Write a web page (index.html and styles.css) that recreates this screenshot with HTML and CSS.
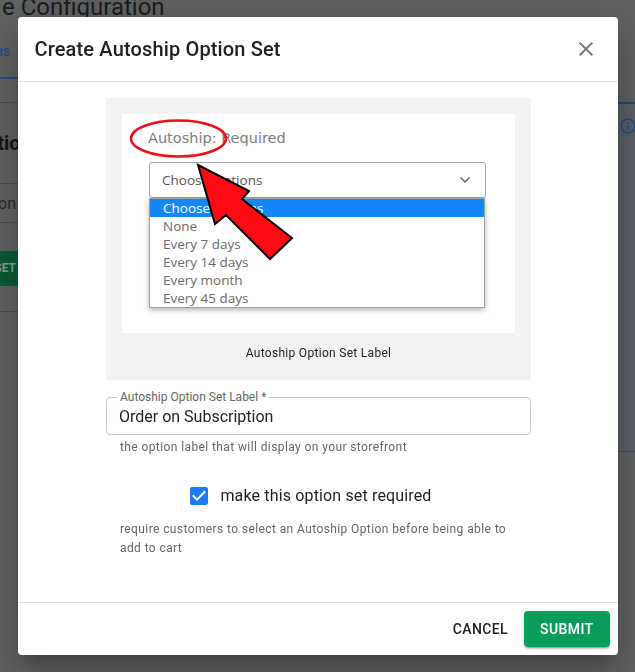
FILE: index.html
```html
<!DOCTYPE html>
<html lang="en">
<head>
  <meta charset="UTF-8">
  <meta name="viewport" content="width=device-width, initial-scale=1.0">
  <title>Autoship Configuration</title>
  <link rel="stylesheet" href="styles.css">
</head>
<body>

  <!-- page behind the dialog -->
  <div class="page">
    <h1 class="page-title">e Configuration</h1>
    <div class="page-main">
      <aside class="page-left">
        <div class="tabs"><span class="tab">Status</span></div>
        <div class="tabs-gap"></div>
        <div class="card-title"><span>Subscription Options</span></div>
        <div class="card-row"><span>Subscription</span></div>
        <div class="card-actions"><span class="page-btn">RESET</span></div>
      </aside>
      <div class="page-center"></div>
      <aside class="page-right">
        <div class="right-top"></div>
        <div class="right-panel">
          <svg class="info-icon" width="18" height="18" viewBox="0 0 24 24">
            <path fill="currentColor" d="M11 7h2v2h-2zm0 4h2v6h-2zm1-9C6.48 2 2 6.48 2 12s4.48 10 10 10 10-4.48 10-10S17.52 2 12 2zm0 18c-4.41 0-8-3.59-8-8s3.59-8 8-8 8 3.59 8 8-3.59 8-8 8z"/>
          </svg>
        </div>
      </aside>
    </div>
  </div>

  <!-- dialog -->
  <div class="backdrop">
    <div class="dialog">
      <div class="dialog-header">
        <h2 class="dialog-title">Create Autoship Option Set</h2>
        <button class="icon-btn" aria-label="close">
          <svg width="24" height="24" viewBox="0 0 24 24">
            <path fill="currentColor" d="M19 6.41 17.59 5 12 10.59 6.41 5 5 6.41 10.59 12 5 17.59 6.41 19 12 13.41 17.59 19 19 17.59 13.41 12z"/>
          </svg>
        </button>
      </div>

      <div class="dialog-content">
        <div class="form">
          <div class="preview">
            <div class="preview-card">
              <div class="preview-label">Autoship: Required</div>
              <div class="preview-select">
                <span>Choose Options</span>
                <svg width="12" height="8" viewBox="0 0 12 8">
                  <path d="M1.5 1.5 6 6l4.5-4.5" fill="none" stroke="#666" stroke-width="1.5"/>
                </svg>
              </div>
              <ul class="preview-options">
                <li class="active">Choose Options</li>
                <li>None</li>
                <li>Every 7 days</li>
                <li>Every 14 days</li>
                <li>Every month</li>
                <li>Every 45 days</li>
              </ul>
            </div>
            <div class="preview-caption">Autoship Option Set Label</div>
          </div>

          <div class="field">
            <span class="field-label">Autoship Option Set Label *</span>
            <div class="field-value">Order on Subscription</div>
          </div>
          <p class="helper">the option label that will display on your storefront</p>

          <div class="check-row">
            <label class="check">
              <span class="check-box">
                <svg width="24" height="24" viewBox="0 0 24 24">
                  <path fill="currentColor" d="M19 3H5c-1.11 0-2 .9-2 2v14c0 1.1.89 2 2 2h14c1.11 0 2-.9 2-2V5c0-1.1-.89-2-2-2zm-9 14l-5-5 1.41-1.41L10 14.17l7.59-7.59L19 8l-9 9z"/>
                </svg>
              </span>
              <span class="check-text">make this option set required</span>
            </label>
          </div>
          <p class="helper">require customers to select an Autoship Option before being able to add to cart</p>
        </div>
      </div>

      <div class="dialog-actions">
        <button class="btn btn-text">Cancel</button>
        <button class="btn btn-submit">Submit</button>
      </div>

      <!-- red annotation drawn on the screenshot -->
      <svg class="annotation" width="600" height="638" viewBox="0 0 600 638">
        <ellipse cx="160.5" cy="121.5" rx="47.5" ry="18" fill="none" stroke="#e8101a" stroke-width="2.5"/>
        <polygon points="180,148 231,174 224,182 274,221 252,242 208,198 197,207" fill="#ff0a12" stroke="#000" stroke-width="2" stroke-linejoin="miter"/>
      </svg>
    </div>
  </div>

</body>
</html>
```

FILE: styles.css
```css
body {
  margin: 0;
  background-color: #616264;
  font-family: Roboto, 'Liberation Sans', sans-serif;
  overflow: hidden;
}

/* page behind the overlay (drawn already dimmed) */
.page {
  height: 672px;
}

.page-title {
  margin: -5px 0 0 2px;
  font-size: 24px;
  font-weight: 400;
  line-height: 25px;
  color: #1b1b1b;
  white-space: nowrap;
}

.page-main {
  display: flex;
}

.page-left {
  width: 18px;
  overflow: hidden;
  display: flex;
  flex-direction: column;
}

.page-left > div {
  display: flex;
  justify-content: flex-end;
  white-space: nowrap;
}

.tabs {
  height: 53px;
  padding-top: 4px;
  align-items: center;
  border-bottom: 2px solid #214d7e;
}

.tab {
  padding-right: 8px;
  font-size: 14px;
  font-weight: 500;
  color: #24528a;
}

.tabs-gap {
  height: 23px;
  border-bottom: 1px solid #4d4e50;
}

.card-title {
  height: 80px;
  align-items: center;
  font-size: 20px;
  font-weight: 700;
  color: #151515;
}

.card-title span {
  margin-right: -24px;
}

.card-row {
  height: 38px;
  align-items: center;
  border-top: 1px solid #4d4e50;
  border-bottom: 1px solid #4d4e50;
  font-size: 16px;
  color: #2c2c2c;
}

.card-row span {
  padding-right: 2px;
}

.card-actions {
  height: 88px;
  align-items: flex-start;
  border-bottom: 1px solid #4d4e50;
}

.page-btn {
  margin-top: 28px;
  margin-right: -14px;
  padding: 0 16px;
  height: 35px;
  line-height: 35px;
  background-color: #0c5a37;
  color: #86a596;
  font-size: 12px;
  font-weight: 700;
  border-radius: 4px;
}

.page-center {
  flex: 1;
}

.page-right {
  width: 17px;
}

.right-top {
  height: 82px;
  border-bottom: 2px solid #1e4a7a;
}

.right-panel {
  height: 348px;
  padding: 13px 0 0 1px;
  box-sizing: border-box;
  background-color: #5c6067;
  border-bottom: 1px solid #3c4c62;
  color: #1d4f8a;
}

.info-icon {
  display: block;
}

/* dialog */
.backdrop {
  position: fixed;
  inset: 0;
  display: flex;
  align-items: center;
  justify-content: center;
}

.dialog {
  position: relative;
  width: 600px;
  height: 638px;
  display: flex;
  flex-direction: column;
  background-color: #ffffff;
  border-radius: 4px;
  box-shadow: 0 11px 15px -7px rgba(0, 0, 0, 0.2), 0 24px 38px 3px rgba(0, 0, 0, 0.14), 0 9px 46px 8px rgba(0, 0, 0, 0.12);
  color: #212121;
}

.dialog-header {
  display: flex;
  align-items: center;
  justify-content: space-between;
  padding: 16px 24px 16px 17px;
  border-bottom: 1px solid #e0e0e0;
}

.dialog-title {
  margin: 0;
  font-size: 20px;
  font-weight: 500;
  line-height: 32px;
  letter-spacing: 0.15px;
}

.icon-btn {
  width: 40px;
  height: 40px;
  margin: -4px -12px -4px 0;
  padding: 8px;
  border: none;
  background: none;
  color: #7a7a7a;
  cursor: pointer;
}

.icon-btn svg {
  display: block;
}

.dialog-content {
  flex: 1;
  padding: 16px 23px 16px 25px;
  border-bottom: 1px solid #e0e0e0;
}

.form {
  width: 425px;
  margin: 0 auto;
}

.preview {
  padding: 16px 16px 17px;
  background-color: #f2f2f2;
}

.preview-card {
  position: relative;
  height: 219px;
  box-sizing: border-box;
  padding: 14px 29px 0 26px;
  background-color: #ffffff;
}

.preview-label {
  font-family: 'DejaVu Sans', sans-serif;
  font-size: 14.5px;
  line-height: 20px;
  color: #7d7d7d;
}

.preview-select {
  display: flex;
  align-items: center;
  justify-content: space-between;
  height: 36px;
  box-sizing: border-box;
  margin: 14px 0 0 1px;
  padding: 0 14px 0 12px;
  border: 1px solid #a3a3a3;
  border-radius: 3px;
  font-family: 'Open Sans', sans-serif;
  font-size: 13.5px;
  color: #555555;
}

.preview-options {
  position: absolute;
  top: 84px;
  left: 27px;
  width: 336px;
  margin: 0;
  padding: 0;
  list-style: none;
  box-sizing: border-box;
  background-color: #ffffff;
  border: 1px solid #a0a0a0;
  box-shadow: 0 2px 5px rgba(0, 0, 0, 0.3);
  font-family: 'Open Sans', sans-serif;
  font-size: 13.5px;
  color: #6a6a6a;
}

.preview-options li {
  height: 18px;
  line-height: 18px;
  padding-left: 13px;
}

.preview-options li.active {
  background-color: #1586f7;
  color: #ffffff;
}

.preview-caption {
  margin-top: 10px;
  text-align: center;
  font-size: 12px;
  line-height: 20px;
  letter-spacing: 0.3px;
  color: #222222;
}

.field {
  position: relative;
  margin-top: 17px;
  height: 38px;
  box-sizing: border-box;
  border: 1px solid #c4c4c4;
  border-radius: 4px;
}

.field-label {
  position: absolute;
  top: -8px;
  left: 10px;
  padding: 0 3px;
  background-color: #ffffff;
  font-size: 12px;
  line-height: 14px;
  color: #666666;
}

.field-value {
  padding: 0 12px;
  font-size: 16px;
  line-height: 37px;
  color: #1f1f1f;
}

.helper {
  margin: 3px 14px 0;
  font-size: 12px;
  line-height: 19.5px;
  letter-spacing: 0.4px;
  color: #666666;
}

.check-row {
  display: flex;
  justify-content: center;
  margin-top: 17px;
}

.check {
  display: flex;
  align-items: center;
  margin: 0 16px 0 -11px;
  cursor: pointer;
}

.check-box {
  display: block;
  padding: 9px;
  color: #1a7cf3;
}

.check-box svg {
  display: block;
}

.check-text {
  font-size: 16px;
  line-height: 24px;
  letter-spacing: 0.15px;
  color: #1f1f1f;
}

.dialog-actions {
  display: flex;
  justify-content: flex-end;
  align-items: center;
  gap: 8px;
  padding: 8px;
}

.btn {
  height: 36px;
  border: none;
  border-radius: 4px;
  font-family: Roboto, sans-serif;
  font-size: 14px;
  font-weight: 500;
  letter-spacing: 0.4px;
  text-transform: uppercase;
  cursor: pointer;
}

.btn-text {
  padding: 6px 8px;
  background: none;
  color: #212121;
}

.btn-submit {
  padding: 6px 16px;
  min-width: 85px;
  background-color: #0a9c5a;
  color: #ffffff;
  box-shadow: 0 3px 1px -2px rgba(0, 0, 0, 0.2), 0 2px 2px 0 rgba(0, 0, 0, 0.14), 0 1px 5px 0 rgba(0, 0, 0, 0.12);
}

.annotation {
  position: absolute;
  top: 0;
  left: 0;
  pointer-events: none;
}
```
